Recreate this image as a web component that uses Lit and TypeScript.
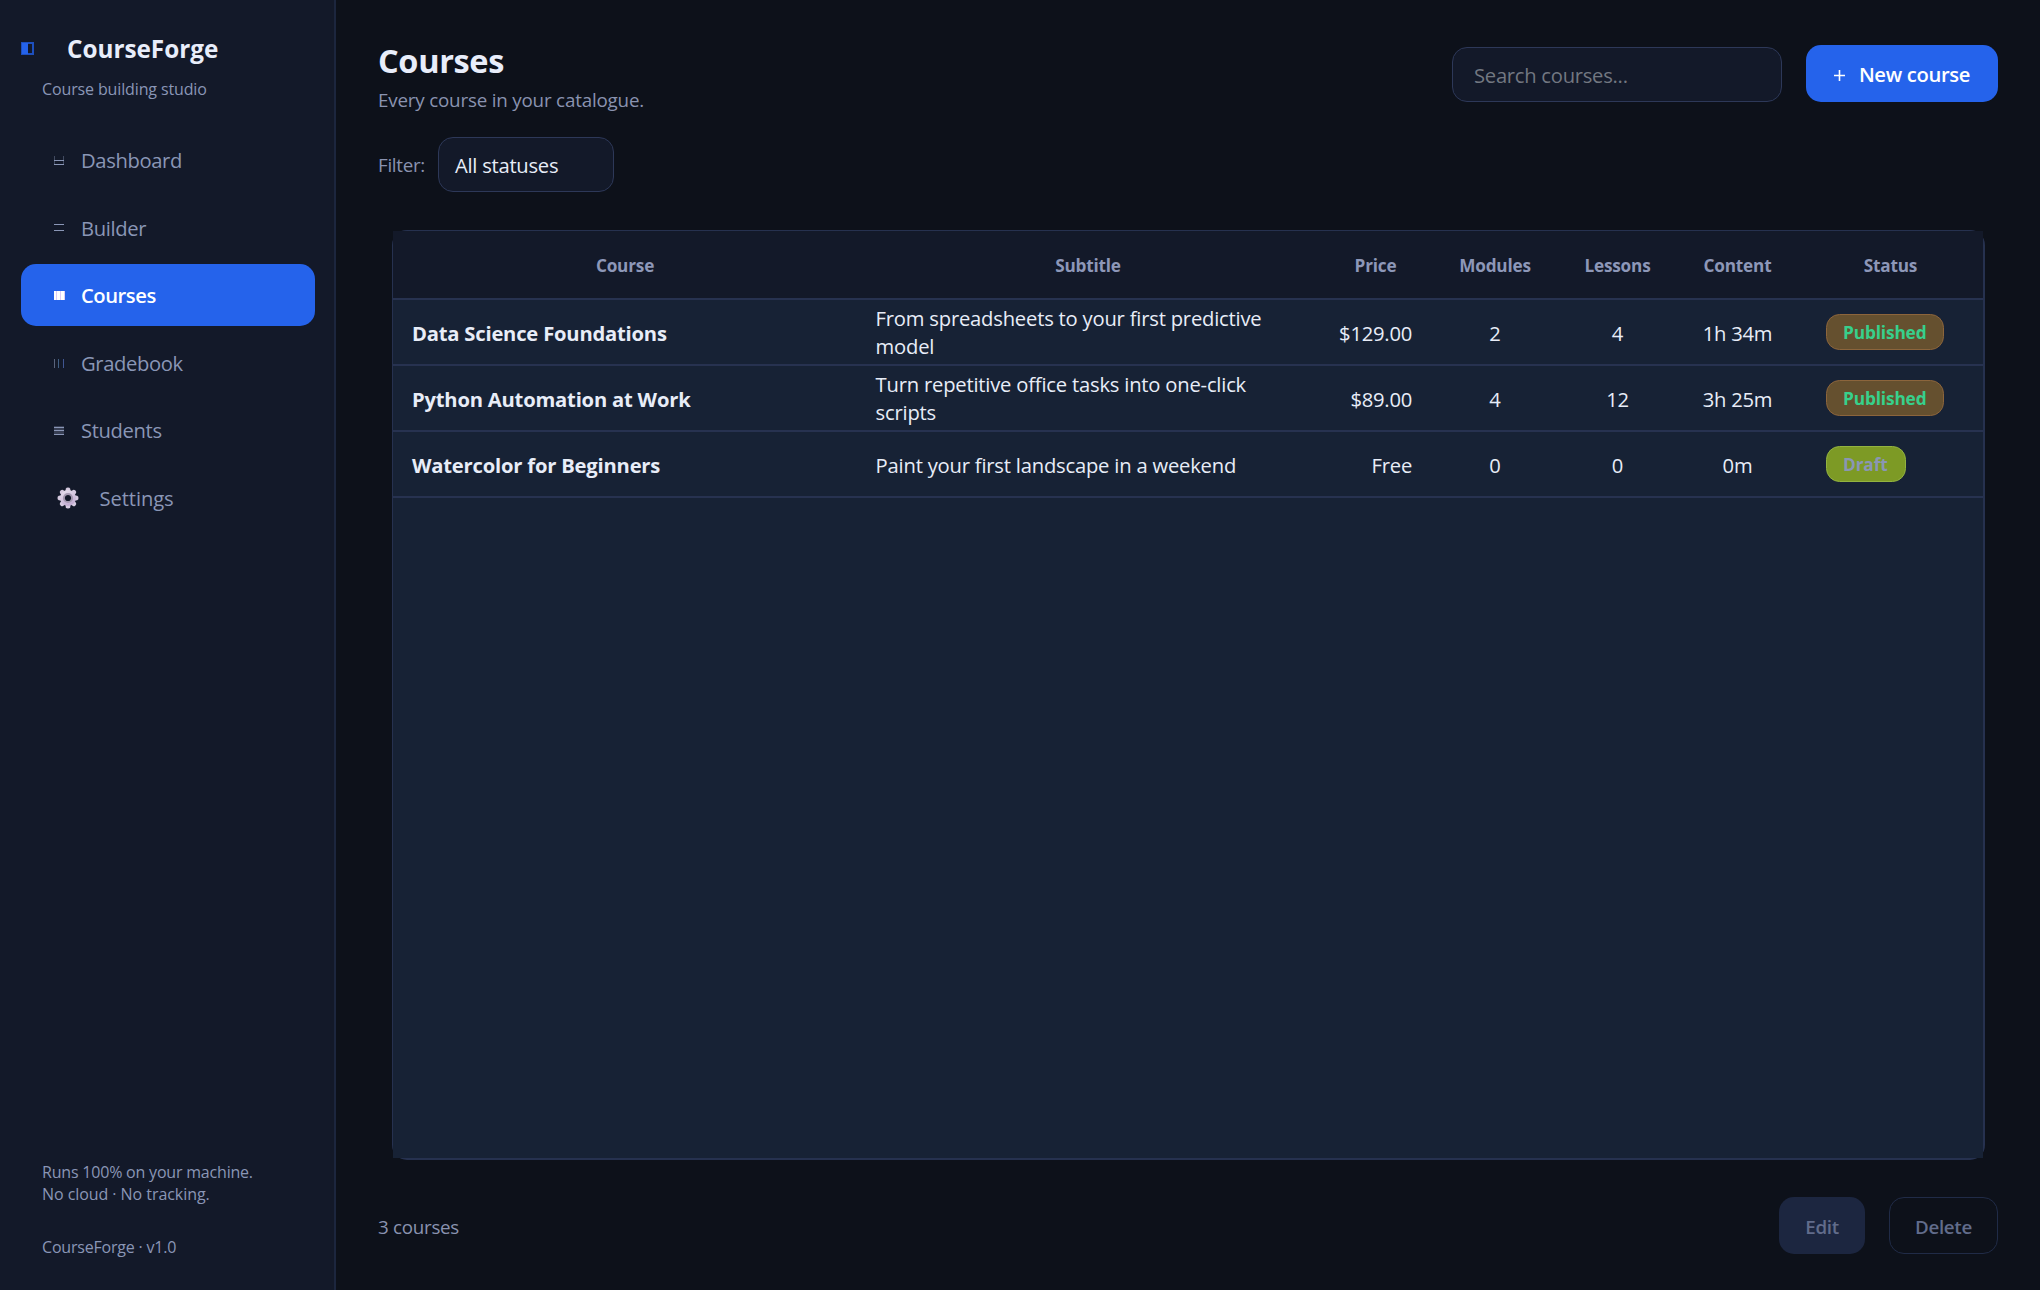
import { LitElement, html, css, svg, nothing, type TemplateResult } from "lit";
import { customElement, property, state } from "lit/decorators.js";
import { classMap } from "lit/directives/class-map.js";

type NavId = "dashboard" | "builder" | "courses" | "gradebook" | "students" | "settings";

interface Course {
  title: string;
  subtitle: string;
  price: string;
  modules: number;
  lessons: number;
  content: string;
  status: "Published" | "Draft";
}

const NAV: { id: NavId; label: string }[] = [
  { id: "dashboard", label: "Dashboard" },
  { id: "builder", label: "Builder" },
  { id: "courses", label: "Courses" },
  { id: "gradebook", label: "Gradebook" },
  { id: "students", label: "Students" },
  { id: "settings", label: "Settings" },
];

const COURSES: Course[] = [
  {
    title: "Data Science Foundations",
    subtitle: "From spreadsheets to your first predictive model",
    price: "$129.00",
    modules: 2,
    lessons: 4,
    content: "1h 34m",
    status: "Published",
  },
  {
    title: "Python Automation at Work",
    subtitle: "Turn repetitive office tasks into one-click scripts",
    price: "$89.00",
    modules: 4,
    lessons: 12,
    content: "3h 25m",
    status: "Published",
  },
  {
    title: "Watercolor for Beginners",
    subtitle: "Paint your first landscape in a weekend",
    price: "Free",
    modules: 0,
    lessons: 0,
    content: "0m",
    status: "Draft",
  },
];

const COLUMNS = ["Course", "Subtitle", "Price", "Modules", "Lessons", "Content", "Status"];

const GLYPHS: Record<Exclude<NavId, "settings">, TemplateResult> = {
  dashboard: svg`
    <g opacity=".4"><rect x="0" y="2" width="1" height="9"/><rect x="9" y="2" width="1" height="9"/></g>
    <rect x="0" y="6" width="10" height="1"/><rect x="0" y="10" width="10" height="1"/>`,
  builder: svg`<rect x="0" y="2" width="10" height="1"/><rect x="0" y="8" width="10" height="1"/>`,
  courses: svg`
    <rect x="0" y="2" width="11" height="9"/>
    <g fill="#dccdf6"><rect x="2" y="2" width="1" height="9"/><rect x="6" y="2" width="1" height="9"/><rect x="10" y="2" width="1" height="9"/></g>`,
  gradebook: svg`
    <g opacity=".6"><rect x="0" y="2" width="1" height="9"/><rect x="4" y="2" width="1" height="9" fill="#5f8fc0"/><rect x="9" y="2" width="1" height="9" fill="#5f80d8"/></g>`,
  students: svg`
    <g opacity=".3"><rect x="0" y="2" width="10" height="9"/></g>
    <rect x="0" y="3" width="10" height="1"/><rect x="0" y="6" width="10" height="1"/><rect x="0" y="10" width="10" height="1"/>`,
};

@customElement("nav-icon")
class NavIcon extends LitElement {
  @property() name: NavId = "dashboard";

  static styles = css`
    :host { display: block; flex: none; }
    svg { display: block; fill: currentColor; }
  `;

  render() {
    if (this.name === "settings") {
      return html`<svg width="22" height="22" viewBox="-11 -11 22 22">
        <defs>
          <linearGradient id="metal" x1="0" y1="0" x2="0.4" y2="1">
            <stop offset="0" stop-color="#e9e3ef"/>
            <stop offset="1" stop-color="#c3add2"/>
          </linearGradient>
        </defs>
        <g fill="#d6cae0">
          ${[0, 45, 90, 135, 180, 225, 270, 315].map(
            (a) => svg`<path transform="rotate(${a})" d="M-2.7 -6 L-2.2 -9.2 Q-1.8 -10.5 0 -10.5 Q1.8 -10.5 2.2 -9.2 L2.7 -6 Z"/>`
          )}
        </g>
        <circle r="7.9" fill="url(#metal)"/>
        <circle r="4.1" fill="none" stroke="#a498b0" stroke-width="2"/>
        <circle r="3.1" fill="#131929"/>
      </svg>`;
    }
    return html`<svg width="11" height="12" viewBox="0 0 11 12" shape-rendering="crispEdges">${GLYPHS[this.name]}</svg>`;
  }
}

@customElement("side-bar")
class SideBar extends LitElement {
  @property() active: NavId = "courses";

  static styles = css`
    :host {
      display: flex;
      flex-direction: column;
      box-sizing: border-box;
      width: 336px;
      flex: none;
      padding: 34px 19px 32px 21px;
      border-right: 2px solid #1c263e;
      background: #131929;
      color: #8a96b6;
    }
    .brand { display: flex; align-items: center; height: 30px; }
    .mark { display: block; margin: -1px 33px 0 0; }
    .name {
      color: #e8edfa;
      font-size: 24.3px;
      font-weight: 700;
      line-height: 30px;
      letter-spacing: -0.02px;
    }
    .tagline { margin: 14px 0 0 21px; font-size: 16px; line-height: 22px; letter-spacing: -0.13px; }
    nav { display: flex; flex-direction: column; gap: 6px; margin-top: 29px; }
    .item {
      display: flex;
      align-items: center;
      height: 61.5px;
      padding-left: 33px;
      border-radius: 15px;
      font-size: 20.2px;
      letter-spacing: -0.36px;
      line-height: 28px;
    }
    .item:nth-child(even) { box-sizing: border-box; padding-top: 1px; }
    .item nav-icon { width: 11px; margin-right: 16px; }
    .item.gear { padding-left: 36px; letter-spacing: -0.1px; }
    .item.gear nav-icon { width: 22px; margin: 1px 20.5px 0 0; }
    .item.active { background: #2563eb; color: #fff; font-weight: 600; letter-spacing: -0.45px; }
    .foot { margin-top: auto; padding-left: 21px; font-size: 16px; line-height: 22px; letter-spacing: -0.2px; }
    .foot .privacy { letter-spacing: -0.06px; }
    .foot .version { margin-top: 31px; }
  `;

  render() {
    return html`
      <div class="brand">
        <svg class="mark" width="13" height="13" viewBox="0 0 13 13" shape-rendering="crispEdges">
          <rect width="13" height="13" fill="#1d4fbe"/>
          <rect x="1" y="1" width="6" height="11" fill="#2563eb"/>
          <rect x="7" y="2" width="4" height="9" fill="#131929"/>
        </svg>
        <div class="name">CourseForge</div>
      </div>
      <div class="tagline">Course building studio</div>
      <nav>
        ${NAV.map(
          ({ id, label }) => html`<div class=${classMap({ item: true, active: id === this.active, gear: id === "settings" })}>
            <nav-icon name=${id}></nav-icon><span>${label}</span>
          </div>`
        )}
      </nav>
      <div class="foot">
        <div>Runs 100% on your machine.</div>
        <div class="privacy">No cloud · No tracking.</div>
        <div class="version">CourseForge · v1.0</div>
      </div>
    `;
  }
}

@customElement("course-table")
class CourseTable extends LitElement {
  @property({ attribute: false }) courses: Course[] = [];

  static styles = css`
    :host {
      display: flex;
      box-sizing: border-box;
      border-style: solid;
      border-color: #26314f;
      border-width: 1px 2px 2px 1px;
      border-radius: 15px;
    }
    .sheet { flex: 1; background: #172235; }
    .row {
      display: grid;
      grid-template-columns: 464px 462px 113px 126px 119px 121px 185px;
      height: 66px;
      color: #e8edf8;
      font-size: 20.2px;
      line-height: 28px;
      letter-spacing: -0.24px;
    }
    .cell {
      display: flex;
      align-items: center;
      justify-content: center;
      box-sizing: border-box;
      border-bottom: 2px solid #273250;
      padding-top: 1px;
    }
    .head { height: 69px; color: #8d97b8; font-size: 17.2px; font-weight: 700; letter-spacing: -0.2px; }
    .head .cell { background: #131929; padding: 2px 0 0 0; }
    .title { justify-content: flex-start; padding-left: 19px; font-weight: 700; letter-spacing: -0.2px; }
    .subtitle { justify-content: flex-start; padding: 0 38px 0 18.6px; letter-spacing: -0.2px; }
    .row:last-child .subtitle { padding-top: 1px; }
    .price { justify-content: flex-end; padding-right: 20px; }
    .status { justify-content: flex-start; align-items: flex-start; padding: 14px 0 0 28px; }
    .badge {
      box-sizing: border-box;
      height: 36px;
      padding: 1px 16.5px 0 16px;
      border: 1px solid #8c653c;
      border-radius: 13.5px;
      background: #65502f;
      color: #37d08c;
      font-size: 17.3px;
      font-weight: 700;
      line-height: 33px;
      letter-spacing: -0.15px;
    }
    .badge.draft { padding-right: 17.5px; border-color: #93b340; background: #7d9a25; color: #8a96b4; }
  `;

  render() {
    return html`<div class="sheet">
      <div class="row head">${COLUMNS.map((c) => html`<div class="cell">${c}</div>`)}</div>
      ${this.courses.map(
        (c) => html`<div class="row">
          <div class="cell title">${c.title}</div>
          <div class="cell subtitle">${c.subtitle}</div>
          <div class="cell price">${c.price}</div>
          <div class="cell">${c.modules}</div>
          <div class="cell">${c.lessons}</div>
          <div class="cell">${c.content}</div>
          <div class="cell status">
            <span class=${classMap({ badge: true, draft: c.status === "Draft" })}>${c.status}</span>
          </div>
        </div>`
      )}
    </div>`;
  }
}

@customElement("app-root")
class AppRoot extends LitElement {
  @state() private courses = COURSES;

  static styles = css`
    :host {
      display: flex;
      width: 100%;
      height: 100vh;
      overflow: hidden;
      background: #0d111a;
      color: #8a93b0;
      font-family: "Open Sans", "Noto Sans", sans-serif;
    }
    main {
      display: flex;
      flex-direction: column;
      flex: 1;
      box-sizing: border-box;
      padding: 39px 42px 36px 42px;
    }
    header { display: flex; height: 74px; }
    .heading { flex: 1; }
    h1 {
      margin: 0 0 4px;
      color: #e8edfa;
      font-size: 32.5px;
      font-weight: 700;
      line-height: 44px;
      letter-spacing: -0.35px;
    }
    .lead { font-size: 18.8px; line-height: 26px; letter-spacing: -0.19px; }
    .tools { display: flex; align-items: center; gap: 24px; height: 57px; margin-top: 6px; }
    .field {
      box-sizing: border-box;
      height: 55px;
      border: 1px solid #2d3858;
      border-radius: 15px;
      background: #131929;
      font-size: 20.2px;
      line-height: 54px;
      letter-spacing: -0.26px;
    }
    .search { width: 330px; margin-top: 2px; padding-left: 21px; color: #727781; }
    .button {
      display: flex;
      align-items: center;
      justify-content: center;
      box-sizing: border-box;
      height: 57px;
      border-radius: 15px;
      font-weight: 600;
    }
    .new { width: 192px; gap: 14px; background: #2563eb; color: #fff; font-size: 20.2px; letter-spacing: -0.33px; }
    .plus { display: block; margin-top: 3px; }
    .filter { display: flex; align-items: center; margin-top: 24px; }
    .label { width: 60px; font-size: 18.8px; letter-spacing: -0.3px; }
    .select { width: 176px; padding-left: 16px; color: #e8edf8; }
    course-table { flex: 1; margin: 38px 13px 0 14px; }
    footer { display: flex; align-items: center; height: 57px; margin-top: 37px; }
    .count { flex: 1; padding-top: 2px; font-size: 18.8px; letter-spacing: -0.28px; }
    .edit, .delete { padding-top: 2px; color: #616c8b; font-size: 18.8px; letter-spacing: -0.35px; }
    .edit { width: 86px; background: #1c2640; }
    .delete { width: 109px; margin-left: 24px; border: 1px solid #202b47; }
  `;

  render() {
    return html`
      <side-bar active="courses"></side-bar>
      <main>
        <header>
          <div class="heading">
            <h1>Courses</h1>
            <div class="lead">Every course in your catalogue.</div>
          </div>
          <div class="tools">
            <div class="field search">Search courses...</div>
            <div class="button new">
              <svg class="plus" width="11" height="11" viewBox="0 0 11 11" stroke="#fff" stroke-width="1.6">
                <path d="M5.5 0V11M0 5.5H11"/>
              </svg>
              <span>New course</span>
            </div>
          </div>
        </header>
        <div class="filter">
          <div class="label">Filter:</div>
          <div class="field select">All statuses</div>
        </div>
        ${this.courses.length ? html`<course-table .courses=${this.courses}></course-table>` : nothing}
        <footer>
          <div class="count">${this.courses.length} courses</div>
          <div class="button edit">Edit</div>
          <div class="button delete">Delete</div>
        </footer>
      </main>
    `;
  }
}
